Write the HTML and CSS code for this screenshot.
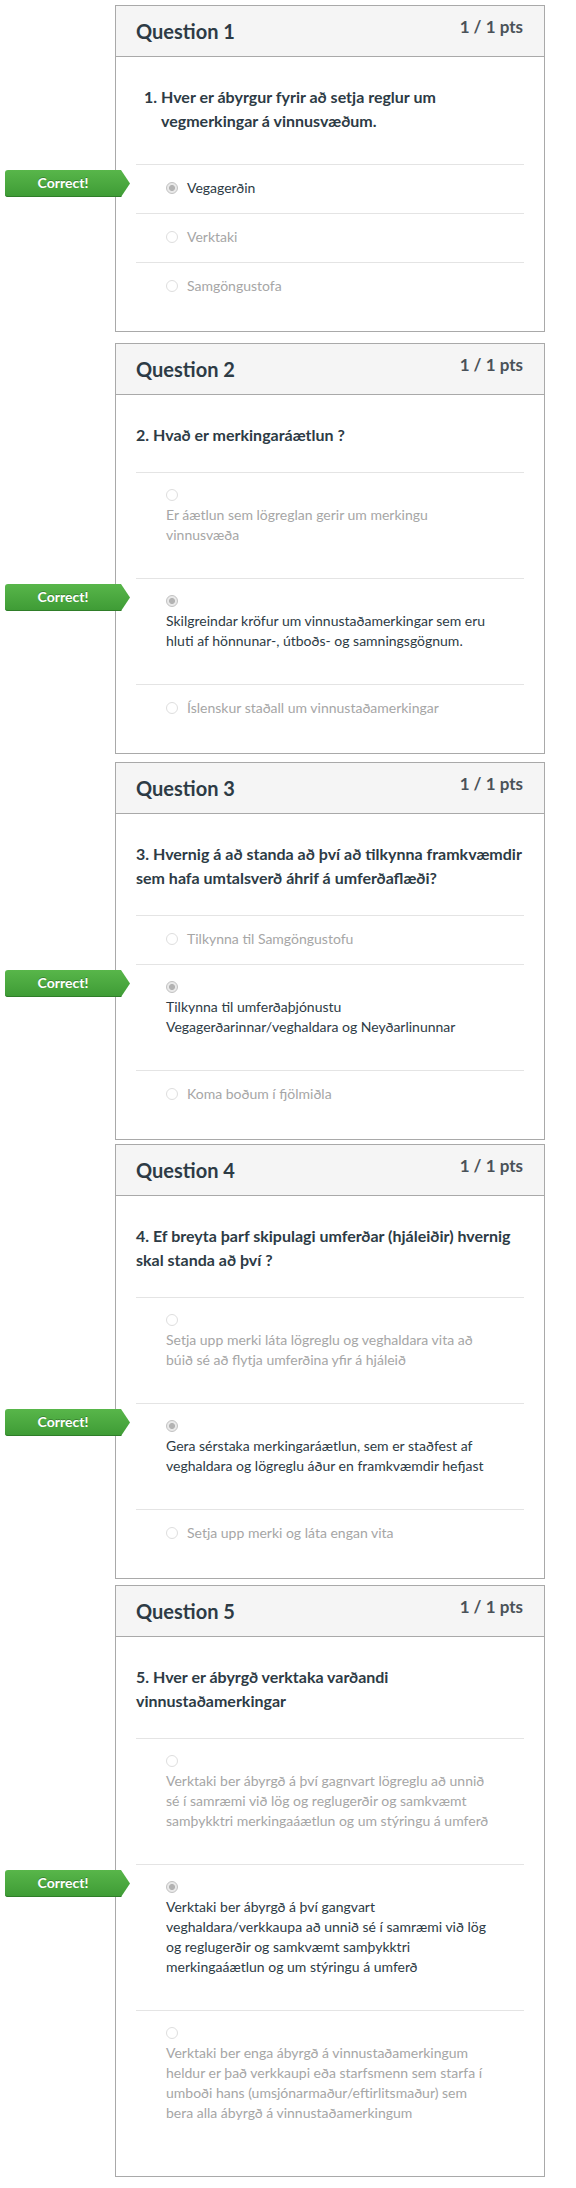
FILE: index.html
```html
<!DOCTYPE html>
<html lang="is">
<head>
<meta charset="utf-8">
<title>Quiz results</title>
<link rel="stylesheet" href="styles.css">
</head>
<body>
<div class="quiz">

  <section class="card">
    <header class="card-head">
      <h2 class="card-title">Question 1</h2>
      <span class="card-pts">1 / 1 pts</span>
    </header>
    <div class="card-body">
      <ol class="q-text q-text--list"><li>Hver er ábyrgur fyrir að setja reglur um vegmerkingar á vinnusvæðum.</li></ol>
      <div class="answers">
        <div class="answer answer--chosen">
          <span class="badge">Correct!</span>
          <span class="radio radio--on"></span>
          <span class="answer-text">Vegagerðin</span>
        </div>
        <div class="answer">
          <span class="radio"></span>
          <span class="answer-text">Verktaki</span>
        </div>
        <div class="answer">
          <span class="radio"></span>
          <span class="answer-text">Samgöngustofa</span>
        </div>
      </div>
    </div>
  </section>

  <section class="card">
    <header class="card-head">
      <h2 class="card-title">Question 2</h2>
      <span class="card-pts">1 / 1 pts</span>
    </header>
    <div class="card-body">
      <p class="q-text">2. Hvað er merkingaráætlun ?</p>
      <div class="answers">
        <div class="answer answer--long">
          <span class="radio"></span>
          <span class="answer-text">Er áætlun sem lögreglan gerir um merkingu vinnusvæða</span>
        </div>
        <div class="answer answer--long answer--chosen">
          <span class="badge">Correct!</span>
          <span class="radio radio--on"></span>
          <span class="answer-text">Skilgreindar kröfur um vinnustaðamerkingar sem eru hluti af hönnunar-, útboðs- og samningsgögnum.</span>
        </div>
        <div class="answer">
          <span class="radio"></span>
          <span class="answer-text">Íslenskur staðall um vinnustaðamerkingar</span>
        </div>
      </div>
    </div>
  </section>

  <section class="card">
    <header class="card-head">
      <h2 class="card-title">Question 3</h2>
      <span class="card-pts">1 / 1 pts</span>
    </header>
    <div class="card-body">
      <p class="q-text">3. Hvernig á að standa að því að tilkynna framkvæmdir sem hafa umtalsverð áhrif á umferðaflæði?</p>
      <div class="answers">
        <div class="answer">
          <span class="radio"></span>
          <span class="answer-text">Tilkynna til Samgöngustofu</span>
        </div>
        <div class="answer answer--long answer--chosen">
          <span class="badge">Correct!</span>
          <span class="radio radio--on"></span>
          <span class="answer-text">Tilkynna til umferðaþjónustu Vegagerðarinnar/veghaldara og Neyðarlinunnar</span>
        </div>
        <div class="answer">
          <span class="radio"></span>
          <span class="answer-text">Koma boðum í fjölmiðla</span>
        </div>
      </div>
    </div>
  </section>

  <section class="card">
    <header class="card-head">
      <h2 class="card-title">Question 4</h2>
      <span class="card-pts">1 / 1 pts</span>
    </header>
    <div class="card-body">
      <p class="q-text">4. Ef breyta þarf skipulagi umferðar (hjáleiðir) hvernig skal standa að því ?</p>
      <div class="answers">
        <div class="answer answer--long">
          <span class="radio"></span>
          <span class="answer-text">Setja upp merki láta lögreglu og veghaldara vita að búið sé að flytja umferðina yfir á hjáleið</span>
        </div>
        <div class="answer answer--long answer--chosen">
          <span class="badge">Correct!</span>
          <span class="radio radio--on"></span>
          <span class="answer-text">Gera sérstaka merkingaráætlun, sem er staðfest af veghaldara og lögreglu áður en framkvæmdir hefjast</span>
        </div>
        <div class="answer">
          <span class="radio"></span>
          <span class="answer-text">Setja upp merki og láta engan vita</span>
        </div>
      </div>
    </div>
  </section>

  <section class="card">
    <header class="card-head">
      <h2 class="card-title">Question 5</h2>
      <span class="card-pts">1 / 1 pts</span>
    </header>
    <div class="card-body">
      <p class="q-text">5. Hver er ábyrgð verktaka varðandi vinnustaðamerkingar</p>
      <div class="answers">
        <div class="answer answer--long">
          <span class="radio"></span>
          <span class="answer-text">Verktaki ber ábyrgð á því gagnvart lögreglu að unnið sé í samræmi við lög og reglugerðir og samkvæmt samþykktri merkingaáætlun og um stýringu á umferð</span>
        </div>
        <div class="answer answer--long answer--chosen">
          <span class="badge">Correct!</span>
          <span class="radio radio--on"></span>
          <span class="answer-text">Verktaki ber ábyrgð á því gangvart veghaldara/verkkaupa að unnið sé í samræmi við lög og reglugerðir og samkvæmt samþykktri merkingaáætlun og um stýringu á umferð</span>
        </div>
        <div class="answer answer--long">
          <span class="radio"></span>
          <span class="answer-text">Verktaki ber enga ábyrgð á vinnustaðamerkingum heldur er það verkkaupi eða starfsmenn sem starfa í umboði hans (umsjónarmaður/eftirlitsmaður) sem bera alla ábyrgð á vinnustaðamerkingum</span>
        </div>
      </div>
    </div>
  </section>

</div>
</body>
</html>
```

FILE: styles.css
```css
* {
  box-sizing: border-box;
}

html, body {
  margin: 0;
  padding: 0;
  background: #ffffff;
}

body {
  font-family: Lato, "Open Sans", "Liberation Sans", sans-serif;
  color: #2d3b45;
}

.quiz {
  padding: 0 31px 0 115px;
}

.card {
  width: 430px;
  border: 1px solid #a9a9a9;
  background: #fff;
}

.card:nth-child(1) { margin-top: 5px; }
.card:nth-child(2) { margin-top: 11px; }
.card:nth-child(3) { margin-top: 8px; }
.card:nth-child(4) { margin-top: 4px; }
.card:nth-child(5) { margin-top: 6px; }

.card-head {
  height: 51px;
  display: flex;
  justify-content: space-between;
  align-items: flex-start;
  padding: 11px 21px 0 20px;
  background: #f5f5f5;
  border-bottom: 1px solid #a9a9a9;
}

.card-title {
  margin: 0;
  font-size: 20px;
  line-height: 28px;
  font-weight: 700;
  color: #2d3b45;
}

.card-pts {
  font-size: 17px;
  line-height: 20px;
  font-weight: 700;
  color: #4a5259;
}

.card-body {
  padding: 0 20px 20px;
}

.q-text {
  margin: 28px 0 25px;
  font-size: 16px;
  line-height: 24px;
  font-weight: 700;
  color: #2d3b45;
}

.q-text--list {
  padding-left: 25px;
  margin-bottom: 31px;
}

.answer {
  position: relative;
  display: flex;
  align-items: center;
  gap: 9px;
  padding: 13px 28px 15px 30px;
  border-top: 1px solid #e4e4e4;
  font-size: 14px;
  line-height: 20px;
  color: #a6a6a6;
}

.answer--long {
  flex-direction: column;
  align-items: flex-start;
  gap: 0;
  padding: 12px 28px 33px 30px;
}

.answer--long .radio {
  margin: 4px 0;
}

.answer--chosen {
  color: #2d3b45;
}

.radio {
  flex: none;
  width: 12px;
  height: 12px;
  border-radius: 50%;
  border: 1px solid #dedede;
  background: #ffffff;
}

.radio--on {
  border-color: #c2c2c2;
  background: radial-gradient(circle, #b3b3b3 0, #b3b3b3 2.6px, #e9e9e9 3.4px, #e9e9e9 100%);
}

.answer-text {
  display: block;
}

.badge {
  position: absolute;
  left: -131px;
  top: 5px;
  width: 125px;
  height: 27px;
  padding-right: 9px;
  text-align: center;
  font-size: 14px;
  line-height: 26px;
  font-weight: 700;
  color: #ffffff;
  text-shadow: 0 -1px 0 rgba(0, 0, 0, 0.25);
  background: linear-gradient(#58b64a, #3e9b35);
  box-shadow: inset 0 -1px 0 #2f7d29;
  border-radius: 3px 0 0 3px;
  clip-path: polygon(0 0, 116px 0, 125px 50%, 116px 100%, 0 100%);
}
```
